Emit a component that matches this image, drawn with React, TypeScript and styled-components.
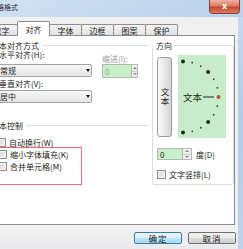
import styled, { createGlobalStyle } from 'styled-components';

const GlobalStyle = createGlobalStyle`
  html, body {
    margin: 0;
    padding: 0;
    background: #fff;
  }
`;

const Window = styled.div`
  width: 243px;
  height: 249px;
  overflow: hidden;
  display: flex;
  flex-direction: column;
  background: linear-gradient(180deg, #c8dcf1 0%, #b4cce7 45%, #bed3ea 100%);
  font-family: "Noto Sans CJK SC", "Noto Sans", sans-serif;
  font-size: 8px;
  line-height: 9px;
  color: #1b1b1b;
`;

const TitleBar = styled.div`
  height: 17px;
  flex: none;
  display: flex;
  align-items: flex-start;
  background: linear-gradient(90deg, rgba(255, 255, 255, 0.15), rgba(120, 160, 210, 0.15));
`;

const Title = styled.span`
  margin-left: -17px;
  margin-top: 3px;
  font-size: 7px;
  line-height: 9px;
  white-space: nowrap;
  color: #1e2a3a;
`;

const CloseButton = styled.div`
  margin-left: auto;
  margin-right: 3px;
  width: 31px;
  height: 14px;
  box-sizing: border-box;
  border: 1px solid #8a4438;
  border-top: none;
  border-radius: 0 0 4px 4px;
  background: linear-gradient(180deg, #eeb3a6 0%, #dc7a66 45%, #c84a30 55%, #d97a60 100%);
  color: #fff;
  font-family: "DejaVu Sans", sans-serif;
  font-size: 8px;
  font-weight: bold;
  display: flex;
  align-items: center;
  justify-content: center;
`;

const Client = styled.div`
  flex: 1;
  margin-right: 5px;
  background: #f0f0f0;
  display: flex;
  flex-direction: column;
`;

const TabStrip = styled.div`
  height: 18px;
  flex: none;
  display: flex;
  align-items: flex-end;
`;

const Tab = styled.div<{ $active?: boolean; $offset?: number }>`
  position: relative;
  z-index: ${p => (p.$active ? 2 : 1)};
  width: 33px;
  box-sizing: border-box;
  height: ${p => (p.$active ? 15 : 11)}px;
  margin-bottom: ${p => (p.$active ? -1 : 0)}px;
  margin-left: ${p => p.$offset ?? 0}px;
  margin-right: -1px;
  border: 1px solid #8c8e94;
  border-bottom: none;
  border-radius: 2px 2px 0 0;
  background: ${p => (p.$active ? '#fff' : 'linear-gradient(180deg, #f4f4f4, #e2e2e2)')};
  display: flex;
  align-items: center;
  justify-content: center;
  white-space: nowrap;
`;

const Panel = styled.div`
  height: 190px;
  flex: none;
  box-sizing: border-box;
  margin-right: 3px;
  padding-top: 5px;
  background: #fff;
  border: 1px solid #898c95;
  border-left: none;
  display: flex;
  align-items: flex-start;
`;

const AlignColumn = styled.div`
  width: 159px;
  margin-left: -9px;
  padding-right: 2px;
  box-sizing: border-box;
  display: flex;
  flex-direction: column;
`;

const SectionHeading = styled.div<{ $gap?: number }>`
  display: flex;
  align-items: center;
  gap: 3px;
  height: 9px;
  margin-top: ${p => p.$gap ?? 0}px;
  white-space: nowrap;

  &::after {
    content: '';
    flex: 1;
    border-top: 1px solid #d5dfe5;
  }
`;

const SelectRow = styled.div`
  display: flex;
  align-items: flex-start;
`;

const FieldColumn = styled.div<{ $indent: number }>`
  display: flex;
  flex-direction: column;
  margin-left: ${p => p.$indent}px;
`;

const FieldLabel = styled.div<{ $gap?: number; $muted?: boolean }>`
  height: 9px;
  margin-top: ${p => p.$gap ?? 0}px;
  color: ${p => (p.$muted ? '#9a9a9a' : 'inherit')};
  white-space: nowrap;
`;

const Select = styled.div<{ $gap: number }>`
  width: 95px;
  height: 13px;
  margin-left: -2px;
  margin-top: ${p => p.$gap}px;
  box-sizing: border-box;
  padding: 0 1px 0 2px;
  border: 1px solid #a4a4a4;
  border-radius: 2px;
  background: linear-gradient(180deg, #f7f7f7, #e5e5e5);
  display: flex;
  align-items: center;

  &::after {
    content: '';
    margin-left: auto;
    border-left: 2.5px solid transparent;
    border-right: 2.5px solid transparent;
    border-top: 3px solid #111;
  }
`;

const NumberField = styled.div<{ $gap?: number; $height: number }>`
  display: flex;
  height: ${p => p.$height}px;
  margin-top: ${p => p.$gap ?? 0}px;
`;

const NumberInput = styled.div<{ $width: number; $muted?: boolean }>`
  width: ${p => p.$width}px;
  box-sizing: border-box;
  padding-left: 2px;
  border: 1px solid #aebcae;
  border-right: none;
  background: #c9efc9;
  color: ${p => (p.$muted ? '#9aa59a' : '#1b1b1b')};
  display: flex;
  align-items: center;
`;

const Spinner = styled.div<{ $width: number }>`
  width: ${p => p.$width}px;
  box-sizing: border-box;
  border: 1px solid #b9b9b9;
  background: #eeeeee;
  display: flex;
  flex-direction: column;
`;

const SpinHalf = styled.div<{ $up?: boolean }>`
  flex: 1;
  display: flex;
  align-items: center;
  justify-content: center;

  & + & {
    border-top: 1px solid #cfcfcf;
  }

  &::before {
    content: '';
    border-left: 2px solid transparent;
    border-right: 2px solid transparent;
    ${p => (p.$up ? 'border-bottom: 2px solid #888;' : 'border-top: 2px solid #888;')}
  }
`;

const CheckRow = styled.div<{ $gap?: number; $indent?: number }>`
  height: 12px;
  margin-top: ${p => p.$gap ?? 0}px;
  margin-left: ${p => (p.$indent ?? 6) - 6}px;
  padding-left: 6px;
  display: flex;
  align-items: center;
  gap: 3px;
  white-space: nowrap;
`;

const CheckBox = styled.span`
  width: 9px;
  height: 9px;
  flex: none;
  box-sizing: border-box;
  border: 1px solid #8e8f8f;
  background: linear-gradient(135deg, #d6d6d6, #f6f6f6);
  box-shadow: inset 0 0 0 1px #f4f4f4;
`;

const Highlight = styled.div`
  width: 89px;
  margin-top: -1px;
  padding-bottom: 12px;
  border: 1px solid #e36b7b;
`;

const OrientationGroup = styled.fieldset`
  margin: 0 0 0 2px;
  padding: 0 0 4px 4px;
  width: 82px;
  min-width: 0;
  box-sizing: border-box;
  border: 1px solid #d5dfe5;
  border-radius: 3px;
`;

const GroupLegend = styled.legend`
  margin-left: -2px;
  padding: 0 1px;
  line-height: 9px;
  font-size: 8px;
`;

const DialRow = styled.div`
  height: 83px;
  margin-top: 5px;
  display: flex;
  align-items: center;
  gap: 6px;
`;

const VerticalTextButton = styled.div`
  width: 15px;
  height: 80px;
  box-sizing: border-box;
  border: 1px solid #9c9c9c;
  border-radius: 3px;
  background: linear-gradient(90deg, #fafafa, #e4e4e4 60%, #d6d6d6);
  display: flex;
  align-items: center;
  justify-content: center;
  writing-mode: vertical-rl;
  text-orientation: upright;
  font-size: 8.5px;
  line-height: 9px;
`;

const Dial = styled.svg`
  width: 48px;
  height: 83px;
  flex: none;
  display: block;
  background: #c8ecc9;
`;

const DegreeRow = styled.div`
  height: 12px;
  margin-top: 10px;
  display: flex;
  align-items: stretch;
  gap: 4px;
`;

const DegreeLabel = styled.span`
  align-self: center;
  white-space: nowrap;
`;

const Footer = styled.div`
  flex: 1;
  display: flex;
  justify-content: flex-end;
  align-items: flex-start;
  gap: 6px;
  padding: 7px 2px 0 0;
  background: linear-gradient(180deg, #f2f2f2, #e9eaec);
`;

const DialogButton = styled.button<{ $default?: boolean }>`
  width: 48px;
  height: 12px;
  padding: 0;
  font-family: inherit;
  font-size: 8.5px;
  line-height: 9px;
  letter-spacing: 1px;
  color: #1b1b1b;
  border: 1px solid ${p => (p.$default ? '#3d7bad' : '#707070')};
  border-radius: 2px;
  background: ${p =>
    p.$default
      ? 'linear-gradient(180deg, #eaf6fd 0%, #d9f0fc 50%, #bee6fd 51%, #a7d9f5 100%)'
      : 'linear-gradient(180deg, #f2f2f2 0%, #ebebeb 50%, #dddddd 51%, #cfcfcf 100%)'};
`;

const TABS = ['数字', '对齐', '字体', '边框', '图案', '保护'];

// dots on the orientation arc, every 15 degrees from +90 to -90
const DIAL_CX = 5;
const DIAL_CY = 42;
const DIAL_R = 35.5;

function OrientationDial() {
  const dots = [];
  for (let a = 90; a >= -90; a -= 15) {
    const rad = (a * Math.PI) / 180;
    const x = DIAL_CX + DIAL_R * Math.cos(rad);
    const y = DIAL_CY - DIAL_R * Math.sin(rad);
    const big = a % 45 === 0;
    const color = a === 0 ? '#b4553d' : big ? '#17311b' : '#2f4a33';
    dots.push(<circle key={a} cx={x} cy={y} r={big ? 2 : 0.9} fill={color} />);
  }
  return (
    <Dial viewBox="0 0 48 83">
      {dots}
      <text x="5" y="45.5" fontSize="9.5" fill="#1f2b20" fontFamily='"Noto Sans CJK SC", sans-serif'>文本</text>
      <line x1="25" y1="42" x2="36" y2="42" stroke="#1f2b20" strokeWidth="1" />
    </Dial>
  );
}

interface SpinFieldProps {
  value: string;
  inputWidth: number;
  spinWidth: number;
  height: number;
  gap?: number;
  muted?: boolean;
}

function SpinField({ value, inputWidth, spinWidth, height, gap, muted }: SpinFieldProps) {
  return (
    <NumberField $gap={gap} $height={height}>
      <NumberInput $width={inputWidth} $muted={muted}>{value}</NumberInput>
      <Spinner $width={spinWidth}>
        <SpinHalf $up />
        <SpinHalf />
      </Spinner>
    </NumberField>
  );
}

export default function App() {
  return (
    <>
      <GlobalStyle />
      <Window>
        <TitleBar>
          <Title>单元格格式</Title>
          <CloseButton>x</CloseButton>
        </TitleBar>
        <Client>
          <TabStrip>
            {TABS.map((t, i) => (
              <Tab key={t} $active={t === '对齐'} $offset={i === 0 ? -15 : 0}>{t}</Tab>
            ))}
          </TabStrip>
          <Panel>
            <AlignColumn>
              <SectionHeading>文本对齐方式</SectionHeading>
              <SelectRow>
                <FieldColumn $indent={8}>
                  <FieldLabel>水平对齐(H):</FieldLabel>
                  <Select $gap={5}>常规</Select>
                  <FieldLabel $gap={2}>垂直对齐(V):</FieldLabel>
                  <Select $gap={2}>居中</Select>
                </FieldColumn>
                <FieldColumn $indent={10}>
                  <FieldLabel $gap={4} $muted>缩进(I):</FieldLabel>
                  <SpinField value="0" inputWidth={29} spinWidth={7} height={14} gap={1} muted />
                </FieldColumn>
              </SelectRow>
              <SectionHeading $gap={18}>文本控制</SectionHeading>
              <CheckRow $gap={6}>
                <CheckBox />
                自动换行(W)
              </CheckRow>
              <Highlight>
                <CheckRow>
                  <CheckBox />
                  缩小字体填充(K)
                </CheckRow>
                <CheckRow>
                  <CheckBox />
                  合并单元格(M)
                </CheckRow>
              </Highlight>
            </AlignColumn>
            <OrientationGroup>
              <GroupLegend>方向</GroupLegend>
              <DialRow>
                <VerticalTextButton>文本</VerticalTextButton>
                <OrientationDial />
              </DialRow>
              <DegreeRow>
                <SpinField value="0" inputWidth={25} spinWidth={10} height={12} />
                <DegreeLabel>度(D)</DegreeLabel>
              </DegreeRow>
              <CheckRow $gap={8} $indent={0}>
                <CheckBox />
                文字竖排(L)
              </CheckRow>
            </OrientationGroup>
          </Panel>
          <Footer>
            <DialogButton $default>确定</DialogButton>
            <DialogButton>取消</DialogButton>
          </Footer>
        </Client>
      </Window>
    </>
  );
}
